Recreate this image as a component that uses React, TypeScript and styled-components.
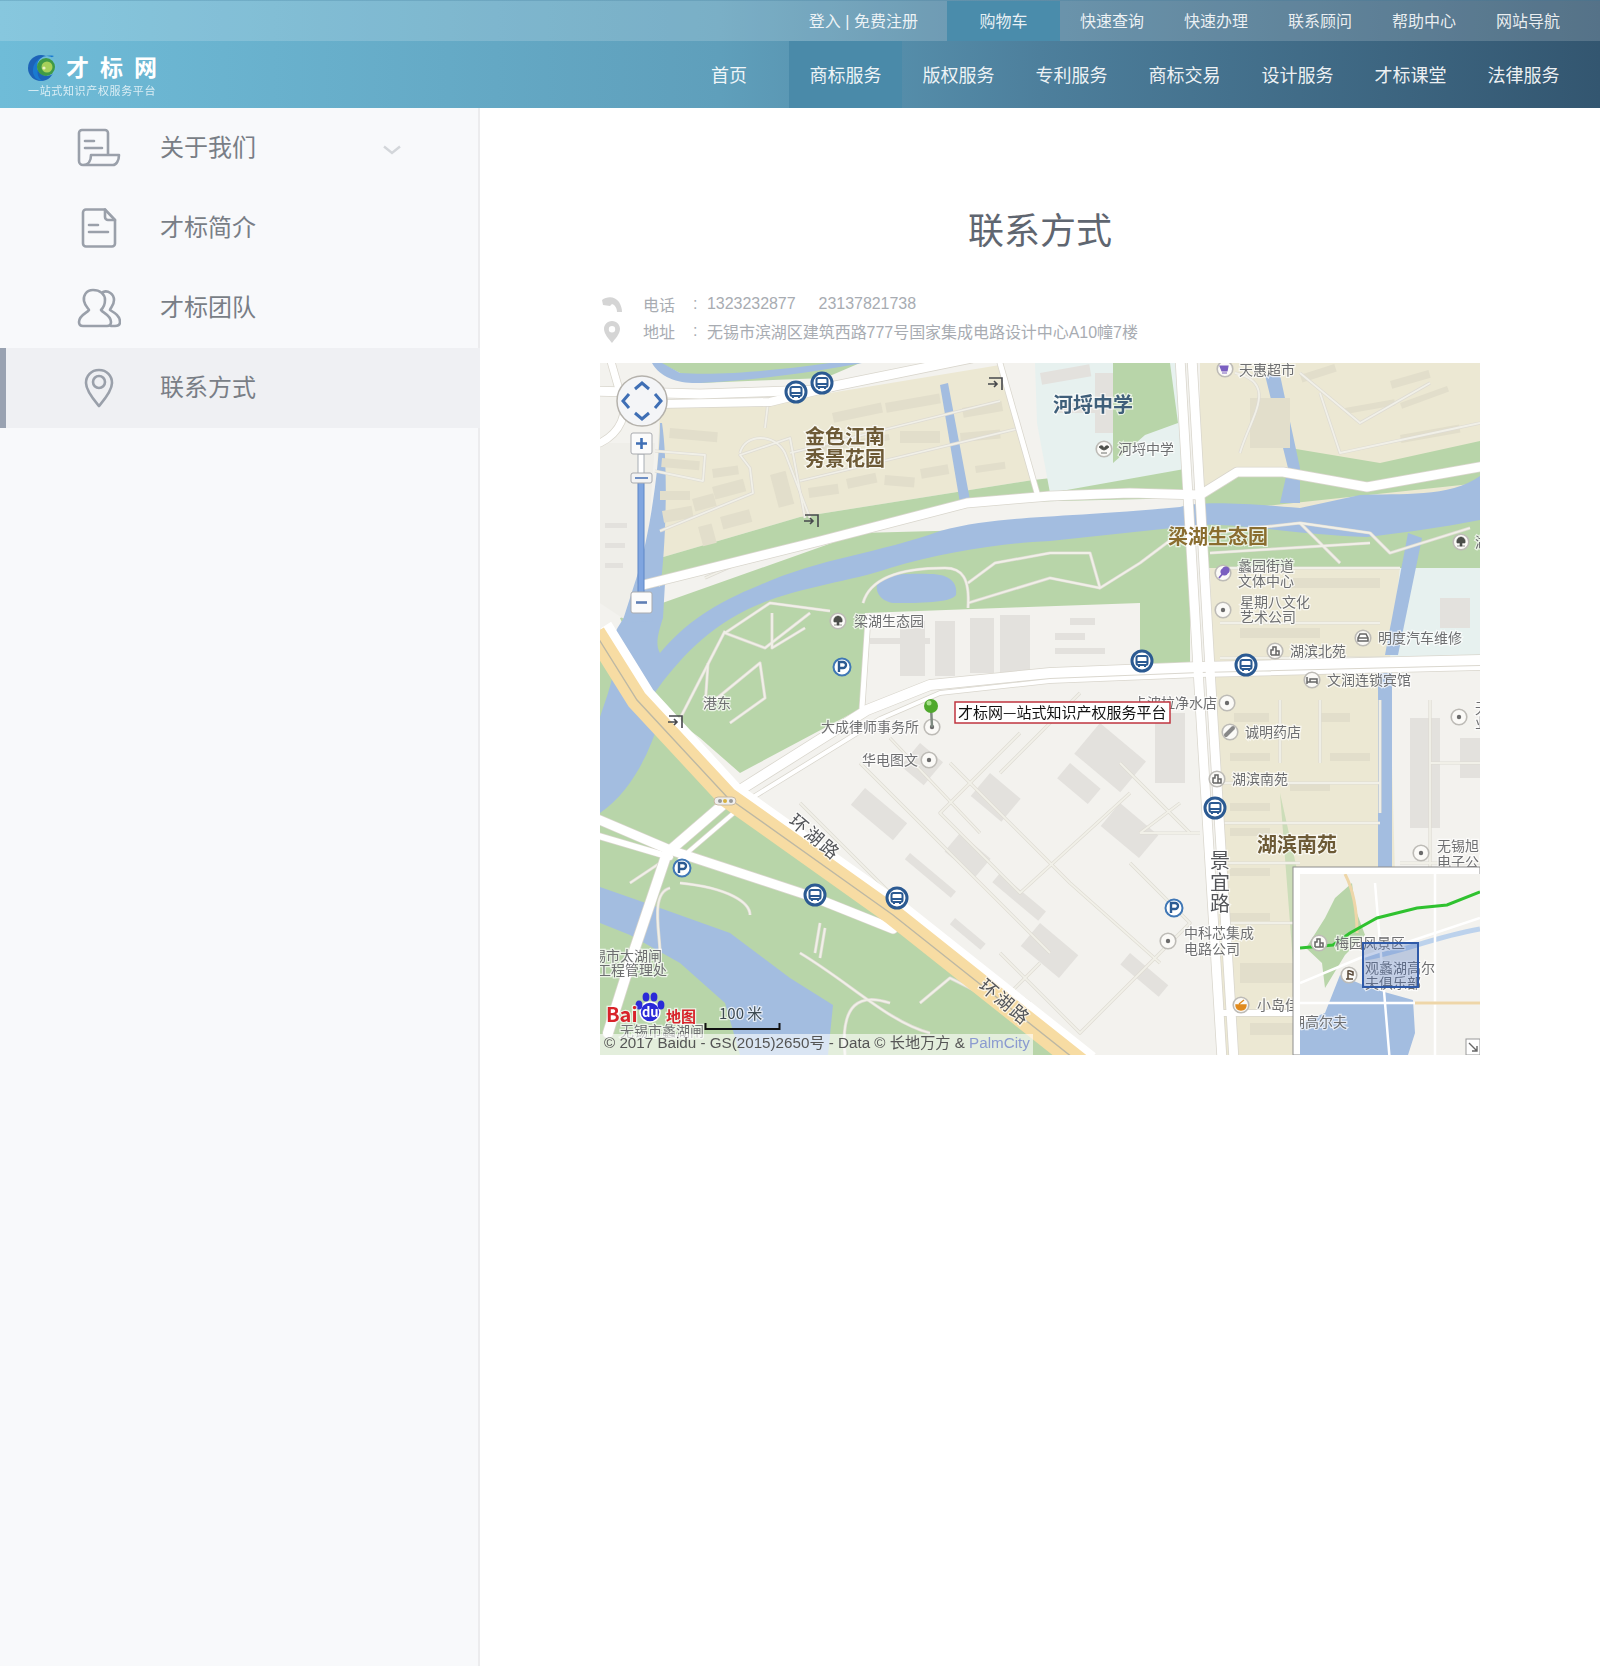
import * as React from 'react'
import styled, { createGlobalStyle } from 'styled-components'

const GlobalStyle = createGlobalStyle`
  html, body {
    margin: 0;
    padding: 0;
    background: #fff;
    font-family: "Liberation Sans", "Noto Sans CJK SC", sans-serif;
  }
  * { box-sizing: border-box; }
`

const Header = styled.header`
  height: 108px;
  background: linear-gradient(90deg, #6fbcd8 0%, #5f9fbb 45%, #4d7f9c 65%, #335670 100%);
`

const TopBar = styled.div`
  height: 41px;
  display: flex;
  justify-content: flex-end;
  padding-right: 20px;
  background: rgba(255, 255, 255, 0.17);
  border-top: 1px solid rgba(60, 120, 150, 0.25);
`

const TopLink = styled.a<{ $active?: boolean; $wide?: boolean }>`
  display: flex;
  align-items: center;
  justify-content: center;
  height: 100%;
  padding: ${({ $wide }) => ($wide ? '0 29px 3px 0' : '0 20px 3px')};
  width: ${({ $active }) => ($active ? '113px' : 'auto')};
  font-size: 16px;
  color: rgba(255, 255, 255, 0.88);
  background: ${({ $active }) => ($active ? '#4a8cab' : 'transparent')};
`

const MainBar = styled.div`
  height: 67px;
  display: flex;
  align-items: stretch;
  padding-right: 20px;
`

const LogoBlock = styled.div`
  display: flex;
  flex-direction: column;
  padding: 13px 0 0 28px;
  margin-right: auto;
  color: #fff;
`

const LogoRow = styled.div`
  display: flex;
  align-items: center;
  gap: 8px;
  height: 28px;
`

const LogoName = styled.div`
  font-size: 23px;
  line-height: 26px;
  letter-spacing: 11px;
  font-weight: 700;
  white-space: nowrap;
`

const LogoSub = styled.div`
  margin-top: 2px;
  font-size: 11px;
  line-height: 14px;
  letter-spacing: 0.65px;
  opacity: 0.75;
  white-space: nowrap;
`

const NavLink = styled.a<{ $active?: boolean; $first?: boolean }>`
  display: flex;
  align-items: center;
  padding: 0 20.5px 2px;
  margin-right: ${({ $first }) => ($first ? '21.500px' : '0')};
  font-size: 18px;
  color: rgba(255, 255, 255, 0.92);
  background: ${({ $active }) => ($active ? '#4a8aa9' : 'transparent')};
`

const Body = styled.div`
  display: flex;
  align-items: stretch;
`

const Sidebar = styled.aside`
  width: 480px;
  min-height: 1558px;
  flex: none;
  background: #f8f9fb;
  border-right: 2px solid #ececee;
`

const SideItem = styled.div<{ $active?: boolean }>`
  display: flex;
  align-items: center;
  gap: 39px;
  height: 80px;
  margin-right: ${({ $active }) => ($active ? '-2px' : '0')};
  padding-left: 77px;
  font-size: 24px;
  line-height: 30px;
  color: #797e86;
  background: ${({ $active }) => ($active ? '#eff0f3' : 'transparent')};
  box-shadow: ${({ $active }) => ($active ? 'inset 6px 0 0 #99a2b1' : 'none')};
`

const SideLabel = styled.span`
  margin-top: 0;
`

const SideIcon = styled.span`
  display: flex;
  align-items: center;
  justify-content: center;
  width: 44px;
  height: 44px;
  svg {
    fill: none;
    stroke: #9aa0aa;
    stroke-width: 2.6;
    stroke-linecap: round;
    stroke-linejoin: round;
  }
`

const Chevron = styled.svg`
  margin: 4px 0 0 88px;
  fill: none;
  stroke: #d3d6da;
  stroke-width: 2.4;
`

const Main = styled.main`
  flex: 1;
  min-width: 0;
  padding: 99px 120px 0;
`

const Title = styled.h1`
  margin: 0 0 34px;
  font-size: 36px;
  line-height: 50px;
  font-weight: 400;
  text-align: center;
  color: #5f6670;
`

const InfoRow = styled.div`
  display: flex;
  align-items: center;
  height: 27px;
  font-size: 16px;
  color: #a8acb2;
  white-space: nowrap;
`

const InfoIcon = styled.span`
  display: flex;
  justify-content: center;
  width: 24px;
  margin-right: 19px;
  svg { fill: #d5d5d5; }
`

const InfoKey = styled.span`
  width: 50px;
  margin-top: -2px;
`

const InfoColon = styled.span`
  width: 14px;
  margin-top: -2px;
`

const InfoValue = styled.span`
  margin-top: -1px;
  letter-spacing: -0.04px;
`

const Phone = styled(InfoValue)`
  margin-right: 23px;
`

const MapFrame = styled.div`
  margin-top: 18px;
  width: 880px;
  height: 692px;
  overflow: hidden;
  svg {
    display: block;
    filter: blur(0.4px);
  }
`

const MapText = styled.text.attrs({ dy: -1.5 })<{ $size?: number; $color?: string; $bold?: boolean; $halo?: boolean }>`
  font-family: "Noto Sans CJK SC", sans-serif;
  font-size: ${({ $size }) => $size ?? 14}px;
  font-weight: ${({ $bold }) => ($bold ? 700 : 400)};
  fill: ${({ $color }) => $color ?? '#6e6f71'};
  dominant-baseline: central;
  paint-order: stroke;
  stroke: rgba(255, 255, 255, 0.7);
  stroke-width: ${({ $halo }) => ($halo === false ? 0 : 2.5)}px;
`

const Copyright = styled.text`
  font-family: "Liberation Sans", "Noto Sans CJK SC", sans-serif;
  font-size: 15.2px;
  fill: #555;
  dominant-baseline: central;
`

const C = {
  base: '#f3f2ee',
  beige: '#ece8d3',
  lot: '#e2decb',
  green: '#b8d5a9',
  blue: '#a3bde0',
  teal: '#e7f1ef',
  block: '#e3e1dd',
  lane: '#dedbd3',
}

const Bus = ({ x, y }: { x: number; y: number }) => (
  <g transform={`translate(${x} ${y})`}>
    <circle r="10" fill="#fff" stroke="#2b5a92" strokeWidth="3" />
    <rect x="-5.5" y="-5" width="11" height="9" rx="2" fill="none" stroke="#2b5a92" strokeWidth="2" />
    <path d="M-5 1H5M-3 6V4M3 6V4" stroke="#2b5a92" strokeWidth="2" />
  </g>
)

const Parking = ({ x, y }: { x: number; y: number }) => (
  <g transform={`translate(${x} ${y})`}>
    <circle r="8.5" fill="#fff" stroke="#3f77b5" strokeWidth="2" />
    <path d="M-3 5V-5H1a3 3 0 0 1 0 6H-3" fill="none" stroke="#2b5a92" strokeWidth="2.4" />
  </g>
)

const Exit = ({ x, y }: { x: number; y: number }) => (
  <g transform={`translate(${x} ${y})`} fill="none" stroke="#46484c" strokeWidth="1.6">
    <path d="M-6 -6H7V6" />
    <path d="M-7 0H2M-1 -3L2 0L-1 3" />
  </g>
)

type PoiKind = 'dot' | 'tree' | 'house' | 'car' | 'bed' | 'mic' | 'pill' | 'food' | 'flag' | 'shop' | 'school'

const PoiGlyph = ({ kind }: { kind: PoiKind }) => {
  switch (kind) {
    case 'tree':
      return <path d="M-4 1C-5 -3 -2 -5 0 -5C2 -5 5 -3 4 1ZM-1 1H1V4H-1ZM-4 4H4" fill="#4c4f4a" stroke="#4c4f4a" strokeWidth="0.6" />
    case 'house':
      return <path d="M-4 4V-1L-2 -1V-4H1V4M1 0H4V4H-4" fill="none" stroke="#666" strokeWidth="1.5" />
    case 'car':
      return <path d="M-5 3V0L-3 -4H3L5 0V3ZM-5 0H5" fill="#fff" stroke="#666" strokeWidth="1.5" />
    case 'bed':
      return <path d="M-5 4V-3M-5 2H5V4M5 2V-1H-2V2" fill="none" stroke="#666" strokeWidth="1.5" />
    case 'mic':
      return <path d="M-4 5L1 -1M0 -4a3 3 0 1 0 4 4a3 3 0 1 0-4-4Z" fill="#7a5fc0" stroke="#7a5fc0" strokeWidth="1.8" />
    case 'pill':
      return <path d="M-4 3L3 -4" stroke="#888" strokeWidth="4" strokeLinecap="round" />
    case 'food':
      return <path d="M-5 0H5C5 4 2 5 0 5C-2 5 -5 4 -5 0ZM-2 -1L3 -5" fill="#e08a1e" stroke="#e08a1e" strokeWidth="1.4" />
    case 'flag':
      return <path d="M-3 4H4M-1 4V-4C1 -5 3 -3 4 -3V0C2 0 1 -2 -1 -1" fill="none" stroke="#5a4a3a" strokeWidth="1.5" />
    case 'shop':
      return <path d="M-5 -3H3L2 2H-3ZM-3 4H2" fill="#7a5fc0" stroke="#7a5fc0" strokeWidth="1.2" />
    case 'school':
      return <path d="M-5 -2C-2 -5 0 -2 0 0C0 -2 3 -5 5 -2C3 0 1 1 0 1C-1 1 -3 0 -5 -2ZM-3 4H3" fill="#4c4f4a" stroke="#4c4f4a" strokeWidth="0.8" />
    default:
      return <circle r="2.2" fill="#6b6b6b" />
  }
}

const Poi = ({ x, y, kind = 'dot' }: { x: number; y: number; kind?: PoiKind }) => (
  <g transform={`translate(${x} ${y})`}>
    <circle r="7.8" fill="#fbfaf7" stroke="#bdbbb6" strokeWidth="1.6" />
    <PoiGlyph kind={kind} />
  </g>
)

const Roads = ({ list }: { list: [string, number][] }) => (
  <g fill="none" strokeLinejoin="round" strokeLinecap="round">
    {list.map(([d, w]) => (
      <path key={`o${d}`} d={d} stroke="#d9d6cd" strokeWidth={w + 1.5} />
    ))}
    {list.map(([d, w]) => (
      <path key={d} d={d} stroke="#fff" strokeWidth={w} />
    ))}
  </g>
)

const bigRoads: [string, number][] = [
  ['M-5 28L100 31L215 27L372 -5', 9],
  ['M60 41L170 39L232 24', 8],
  ['M0 80C20 70 30 50 20 30L10 -5', 7],
  ['M43 222L220 178L367 140L450 133L530 130L600 132L637 109L683 109L767 124L885 103', 9],
  ['M885 297L600 304L450 310L330 322L267 347L140 427L67 490L30 600L8 670', 10],
  ['M885 305L600 312L450 318L340 330L280 356L150 436L80 496', 4],
  ['M-5 455L70 487L213 534L293 566', 9],
  ['M-5 472L70 494', 6],
  ['M262 345L268 255', 5],
  ['M580 -5L600 340L622 697', 9],
  ['M592 -5L612 340L634 697', 9],
  ['M620 650H700', 6],
  ['M400 0L437 130', 5],
]

const thinPaths = [
  'M55 88L105 92L103 118L55 108',
  'M60 168L153 130L150 105L140 92L190 75L205 155',
  'M140 90C145 70 175 70 185 90L210 155',
  'M190 90L400 38',
  'M200 118L420 65',
  'M165 65L168 40',
  'M105 215L150 195L185 190',
  'M263 240C270 215 300 205 345 205C362 205 370 215 368 245',
  'M368 220L395 200L450 190L490 190L500 225L540 200L580 170',
  'M368 240L450 215L500 225',
  'M230 248L170 240L125 270L165 285L210 250',
  'M172 250V285L205 265',
  'M108 300L105 345L160 300L165 335L130 360',
  'M125 268L70 375',
  'M610 170L700 160L770 170L790 190L870 165',
  'M700 160L740 200',
  'M610 190L770 180',
  'M635 10C680 20 650 55 640 90',
  'M700 10L760 60L830 20M720 30L740 90L880 60',
  'M620 205H800M620 260H780M620 295H790',
  'M680 337V400M720 337V400M780 337V450',
  'M620 420H780M620 460H780M620 500H700M620 560H700',
  'M830 337V620M830 400H880M800 500H880',
  'M350 400L470 520L560 600M420 370L340 450L420 530L530 430M480 330L400 410M520 400L590 470',
  'M260 400L360 500L450 590M290 375L380 470M200 440L310 550L430 640',
  'M530 500L590 560L480 670L400 590M540 470L580 440M600 470H540',
  'M30 520L60 500M80 520C130 525 150 540 150 552M70 525C50 530 60 570 60 590',
  'M220 560L215 590M225 565L220 595M200 590C250 620 290 660 330 670M320 640L350 615L400 640L440 600',
  'M245 692C240 640 260 630 290 640',
]

const lots: [number, number, number, number, number][] = [
  [70, 65, 48, 10, 5],
  [62, 95, 38, 9, 5],
  [112, 106, 26, 9, -8],
  [60, 128, 30, 9, 0],
  [62, 148, 30, 12, -10],
  [92, 136, 22, 13, -15],
  [112, 124, 32, 13, -15],
  [120, 154, 30, 13, -15],
  [98, 164, 14, 20, -15],
  [170, 112, 16, 34, -15],
  [208, 125, 30, 10, -8],
  [246, 116, 30, 10, -12],
  [285, 112, 30, 10, 5],
  [320, 106, 28, 10, -10],
  [232, 50, 50, 10, -12],
  [285, 40, 55, 10, -10],
  [300, 68, 40, 12, 0],
  [362, 45, 40, 10, -10],
  [360, 70, 40, 9, -5],
  [375, 103, 30, 7, -8],
  [210, 85, 80, 6, -10],
  [650, 35, 40, 50, 0],
  [700, 12, 36, 8, -18],
  [790, 18, 40, 8, -16],
  [745, 45, 50, 6, -10],
  [800, 40, 50, 6, -20],
  [800, 72, 60, 8, -10],
  [640, 265, 40, 10, 0],
  [680, 265, 40, 10, 0],
  [690, 215, 50, 10, 0],
  [740, 215, 40, 10, 0],
  [634, 350, 35, 9, 0],
  [720, 350, 30, 9, 0],
  [630, 390, 40, 8, 0],
  [730, 390, 40, 8, 0],
  [690, 420, 40, 8, 0],
  [630, 440, 40, 8, 0],
  [630, 465, 40, 8, 0],
  [630, 505, 40, 8, 0],
  [630, 550, 40, 8, 0],
  [640, 600, 60, 20, 0],
  [650, 660, 50, 12, 0],
]

const blocks: [number, number, number, number, number][] = [
  [270, 275, 60, 6, 0],
  [300, 258, 25, 55, 0],
  [335, 258, 20, 55, 0],
  [370, 255, 24, 55, 0],
  [400, 252, 30, 60, 0],
  [455, 270, 30, 7, 0],
  [470, 255, 25, 7, 0],
  [455, 285, 50, 6, 0],
  [265, 425, 55, 22, 40],
  [320, 380, 30, 30, 40],
  [390, 410, 40, 30, 40],
  [360, 470, 40, 24, 40],
  [400, 510, 60, 12, 40],
  [520, 440, 50, 30, 40],
  [500, 360, 60, 40, 40],
  [470, 400, 40, 20, 40],
  [440, 560, 50, 30, 40],
  [530, 590, 50, 15, 40],
  [310, 490, 60, 8, 40],
  [355, 555, 40, 8, 40],
  [555, 350, 30, 70, 0],
  [810, 355, 30, 110, 0],
  [860, 375, 20, 40, 0],
  [5, 160, 22, 5, 0],
  [5, 180, 20, 5, 0],
  [5, 200, 18, 5, 0],
  [440, 10, 50, 12, -10],
  [455, 40, 40, 10, 0],
  [840, 235, 30, 30, 0],
  [495, 10, 18, 60, 0],
]

const smallLabels: [number, number, string][] = [
  [639, 7, '天惠超市'],
  [518, 86, '河埒中学'],
  [638, 203, '蠡园街道'],
  [638, 218, '文体中心'],
  [640, 239, '星期八文化'],
  [640, 254, '艺术公司'],
  [778, 275, '明度汽车维修'],
  [690, 288, '湖滨北苑'],
  [727, 317, '文润连锁宾馆'],
  [533, 340, '卡波拉净水店'],
  [645, 369, '诚明药店'],
  [632, 416, '湖滨南苑'],
  [584, 570, '中科芯集成'],
  [584, 586, '电路公司'],
  [657, 642, '小岛佳'],
  [837, 483, '无锡旭日'],
  [837, 499, '电子公司'],
  [875, 345, '无'],
  [875, 360, '业'],
  [875, 179, '湖'],
  [254, 258, '梁湖生态园'],
  [103, 340, '港东'],
  [221, 364, '大成律师事务所'],
  [262, 397, '华电图文'],
  [-8, 593, '锡市太湖闸'],
  [-3, 607, '工程管理处'],
  [20, 668, '无锡市蠡湖闸'],
]

const poiPoints: [number, number, PoiKind][] = [
  [625, 6, 'shop'],
  [504, 86, 'school'],
  [623, 210, 'mic'],
  [623, 247, 'dot'],
  [763, 275, 'car'],
  [675, 288, 'house'],
  [712, 317, 'bed'],
  [627, 340, 'dot'],
  [630, 369, 'pill'],
  [617, 416, 'house'],
  [568, 578, 'dot'],
  [641, 642, 'food'],
  [821, 490, 'dot'],
  [859, 354, 'dot'],
  [861, 179, 'tree'],
  [238, 258, 'tree'],
  [332, 364, 'dot'],
  [329, 397, 'dot'],
]

const MapDrawing = () => (
  <svg width="880" height="692" viewBox="0 0 880 692">
    <defs>
      <clipPath id="inset">
        <rect x="700" y="511" width="180" height="181" />
      </clipPath>
    </defs>
    <rect width="880" height="692" fill={C.base} />

    {/* land use */}
    <polygon points="60,45 230,30 400,2 433,117 200,154 53,197" fill={C.beige} />
    <polygon points="60,0 260,0 225,15 100,20" fill={C.green} />
    <polygon points="53,197 200,154 433,117 590,100 590,135 367,140 220,178 43,222" fill={C.green} />
    <polygon points="435,0 575,0 590,105 450,130 437,60" fill={C.teal} />
    <polygon points="513,0 570,0 578,60 545,72 513,100" fill={C.green} />
    <polygon points="600,0 880,0 880,180 600,180" fill={C.beige} />
    <polygon points="690,85 780,100 880,78 880,110 770,125 690,112" fill={C.green} />
    <polygon points="600,132 637,112 683,112 767,128 880,108 880,120 600,150" fill={C.green} />
    <polygon points="600,160 880,150 880,205 600,205" fill={C.green} />
    <polygon points="610,205 800,205 790,330 800,692 622,692" fill={C.beige} />
    <polygon points="800,205 880,205 880,295 790,295" fill={C.teal} />
    <polygon points="680,430 700,520 720,692 700,692 690,560" fill={C.green} opacity="0.6" />
    <polygon points="20,255 260,170 450,165 590,150 590,300 540,300 540,240 265,250 262,345 140,410 100,375 60,345 40,300" fill={C.green} />
    <polygon points="0,270 127,430 293,552 475,692 0,692" fill={C.green} />
    <polygon points="0,80 55,80 45,220 30,260 0,240" fill="#efeee9" />

    {/* water */}
    <g fill={C.blue}>
      <path d="M52 0C60 15 80 21 100 20C160 17 220 8 262 0H230C180 7 120 13 80 10L62 0Z" />
      <path d="M880 113V157C840 165 800 170 767 174C700 172 640 160 600 162L450 178C400 180 340 190 290 205C240 222 180 225 130 256C90 280 60 320 45 345L60 355C50 390 30 430 0 450V354C8 330 20 300 15 270C30 240 50 230 65 220L63 255C58 270 55 282 60 290C85 260 115 240 160 222C220 195 280 190 340 168C400 152 450 156 580 144C600 138 640 140 700 145L760 132C800 130 850 135 880 113Z" />
      <path d="M340 22L348 20L370 137L360 140Z" />
      <path d="M665 12L680 12L700 105L700 140L680 140L688 105Z" />
      <path d="M808 170L822 175L798 292H785Z" />
      <rect x="778" y="295" width="14" height="210" />
      <path d="M60 60C60 100 50 170 38 210L22 260L52 258L62 210C66 170 68 100 62 60Z" />
      <path d="M0 524L60 545L130 570L190 615L233 642L228 692H140L125 640L80 600L30 572L0 560Z" />
      <path d="M277 222C282 212 300 210 330 211C350 211 358 220 356 232C350 240 320 240 295 240C285 240 275 232 277 222Z" />
    </g>

    {/* buildings */}
    {lots.map(([x, y, w, h, r]) => (
      <rect key={`l${x}${y}`} x={x} y={y} width={w} height={h} fill={C.lot} transform={`rotate(${r} ${x} ${y})`} />
    ))}
    {blocks.map(([x, y, w, h, r]) => (
      <rect key={`b${x}${y}`} x={x} y={y} width={w} height={h} fill={C.block} transform={`rotate(${r} ${x} ${y})`} />
    ))}

    {/* lanes */}
    <g fill="none" strokeLinejoin="round">
      {thinPaths.map((d) => (
        <path key={`o${d}`} d={d} stroke={C.lane} strokeWidth="3.2" />
      ))}
      {thinPaths.map((d) => (
        <path key={d} d={d} stroke="#f1f0e8" strokeWidth="1.8" />
      ))}
    </g>

    <Roads list={bigRoads} />

    {/* ring road */}
    <g fill="none">
      <path d="M6 262L48 330L137 427L303 545L492 695" stroke="#fff" strokeWidth="12" />
      <path d="M-5 270L37 337L127 434L293 552L482 702" stroke="#f7dca3" strokeWidth="21" />
      <path d="M-5 270L37 337L127 434L293 552L482 702" stroke="#bdb8a4" strokeWidth="1.4" />
    </g>
    <rect x="114" y="434" width="22" height="8" rx="4" fill="#eee" stroke="#c9b9a0" />
    <circle cx="120" cy="438" r="2" fill="#999" />
    <circle cx="125" cy="438" r="2" fill="#d7b13f" />
    <circle cx="131" cy="438" r="2" fill="#999" />

    {/* poi */}
    {poiPoints.map(([x, y, kind]) => (
      <Poi key={`p${x}${y}`} x={x} y={y} kind={kind} />
    ))}
    {smallLabels.map(([x, y, text]) => (
      <MapText key={text + x} x={x} y={y}>
        {text}
      </MapText>
    ))}

    <MapText x={205} y={74} $size={20} $bold $color="#6d5a36">金色江南</MapText>
    <MapText x={205} y={96} $size={20} $bold $color="#6d5a36">秀景花园</MapText>
    <MapText x={453} y={42} $size={20} $bold $color="#3f5f7a">河埒中学</MapText>
    <MapText x={568} y={174} $size={20} $bold $color="#8a6d2f">梁湖生态园</MapText>
    <MapText x={657} y={482} $size={20} $bold $color="#6d5a36">湖滨南苑</MapText>
    <MapText x={610} y={498} $size={20} $color="#54565a">景</MapText>
    <MapText x={610} y={520} $size={20} $color="#54565a">宜</MapText>
    <MapText x={610} y={541} $size={20} $color="#54565a">路</MapText>
    <MapText x={215} y={474} $size={18} $color="#54565a" textAnchor="middle" letterSpacing="2" transform="rotate(40 215 474)">环湖路</MapText>
    <MapText x={405} y={639} $size={18} $color="#54565a" textAnchor="middle" letterSpacing="2" transform="rotate(40 405 639)">环湖路</MapText>

    {[[196, 29], [222, 20], [542, 298], [646, 302], [215, 532], [297, 535], [615, 445]].map(([x, y]) => (
      <Bus key={`bus${x}`} x={x} y={y} />
    ))}
    {[[242, 304], [82, 505], [574, 545]].map(([x, y]) => (
      <Parking key={`park${x}`} x={x} y={y} />
    ))}
    {[[395, 21], [211, 158], [75, 359]].map(([x, y]) => (
      <Exit key={`exit${x}`} x={x} y={y} />
    ))}

    {/* marker */}
    <path d="M331 343L332 364" stroke="#7e8a80" strokeWidth="2.5" />
    <circle cx="331" cy="343" r="7" fill="#4fa82c" />
    <circle cx="329" cy="340" r="2.5" fill="#a6e08a" />
    <rect x="355" y="339" width="215" height="21" fill="#fff" stroke="#c0353f" strokeWidth="1.5" />
    <MapText x={358} y={350} $size={15} $color="#111" $halo={false}>才标网—站式知识产权服务平台</MapText>

    {/* pan and zoom */}
    <circle cx="42" cy="38" r="25" fill="#f4f5f7" stroke="#b5b2ac" strokeWidth="1.5" />
    <g fill="none" stroke="#3f6fb5" strokeWidth="3">
      <path d="M35 26L42 20L49 26" />
      <path d="M35 50L42 56L49 50" />
      <path d="M29 31L23 38L29 45" />
      <path d="M55 31L61 38L55 45" />
    </g>
    <rect x="38" y="91" width="6" height="24" fill="#fff" stroke="#a8aeb6" />
    <rect x="38" y="118" width="6" height="112" fill="#7fa5e0" stroke="#5f86c6" />
    <rect x="31" y="70" width="21" height="21" rx="2" fill="#fbfbfb" stroke="#a9abaf" />
    <path d="M36 80.5H47M41.5 75V86" stroke="#3f6fb5" strokeWidth="2.6" />
    <rect x="31" y="110" width="21" height="10" rx="2" fill="#f3f3f3" stroke="#a9abaf" />
    <path d="M35 115H48" stroke="#6f8fc4" strokeWidth="2" />
    <rect x="31" y="229" width="21" height="21" rx="2" fill="#fbfbfb" stroke="#a9abaf" />
    <path d="M36 239.5H47" stroke="#5f7fb5" strokeWidth="2.6" />

    {/* overview */}
    <rect x="693" y="504" width="187" height="188" fill="#fff" stroke="#8e8e8e" />
    <g clipPath="url(#inset)">
      <rect x="700" y="511" width="180" height="181" fill="#f3f2ee" />
      <polygon points="752,520 755,545 765,572 745,592 725,625 722,600 706,585 725,555 735,535" fill={C.green} />
      <path d="M700 660L725 650L740 612L770 625L813 637L815 670L808 692H700Z" fill={C.blue} />
      <path d="M765 595C800 590 830 575 880 566" fill="none" stroke="#bcd2ec" strokeWidth="5" />
      <g fill="none" stroke="#fff" strokeWidth="2.5">
        <path d="M700 620L760 595L880 555" />
        <path d="M835 511V692M775 520L790 700M880 640H700" />
      </g>
      <path d="M745 511C755 530 757 555 757 570" fill="none" stroke="#eed6a8" strokeWidth="3" />
      <path d="M815 640H880" fill="none" stroke="#eed6a8" strokeWidth="3" />
      <path d="M700 585L733 582L750 570L777 555L817 545L847 542L880 529" fill="none" stroke="#2fc22f" strokeWidth="3" />
      <Poi x={719} y={580} kind="house" />
      <Poi x={749} y={612} kind="flag" />
      <MapText x={735} y={580}>梅园风景区</MapText>
      <MapText x={765} y={605}>观蠡湖高尔</MapText>
      <MapText x={765} y={620}>夫俱乐部</MapText>
      <MapText x={691} y={659}>湖高尔夫</MapText>
      <rect x="763" y="580" width="55" height="44" fill="rgba(70,110,190,0.3)" stroke="#2f5aa8" strokeWidth="2" />
      <rect x="866" y="676" width="14" height="16" fill="#fff" stroke="#999" />
      <path d="M869 680L877 688M877 683V688H872" fill="none" stroke="#666" strokeWidth="1.4" />
    </g>

    {/* baidu logo, scale, copyright */}
    <g transform="translate(50 645)">
      <circle cx="0" cy="4" r="10" fill="#2a2ad8" stroke="#fff" strokeWidth="1.5" />
      <ellipse cx="-11" cy="-3" rx="3.4" ry="4.5" fill="#2a2ad8" />
      <ellipse cx="-4" cy="-11" rx="3.4" ry="4.5" fill="#2a2ad8" />
      <ellipse cx="4" cy="-11" rx="3.4" ry="4.5" fill="#2a2ad8" />
      <ellipse cx="11" cy="-3" rx="3.4" ry="4.5" fill="#2a2ad8" />
      <MapText x={-8} y={5} $size={13} $bold $color="#fff" $halo={false}>du</MapText>
    </g>
    <MapText x={6} y={652} $size={20} $bold $color="#d8232a">Bai</MapText>
    <MapText x={66} y={654} $size={15} $bold $color="#d8232a">地图</MapText>
    <MapText x={119} y={651} $size={15} $color="#3d4a50">100 米</MapText>
    <path d="M105.5 660V666H179.5V660" fill="none" stroke="#111" strokeWidth="2" />
    <rect x="0" y="671" width="433" height="21" fill="rgba(255,255,255,0.6)" />
    <Copyright x={4} y={679}>
      © 2017 Baidu - GS(2015)2650号 - Data © 长地万方 &amp; <tspan fill="#8b9bd0">PalmCity</tspan>
    </Copyright>
  </svg>
)

const SwirlLogo = () => (
  <svg width="30" height="28" viewBox="0 0 30 28">
    <circle cx="13" cy="14" r="13" fill="#1d63b8" />
    <path d="M26 2C16 0 6 6 5 15C4 22 9 27 15 27C8 24 8 14 14 9C18 5 23 4 26 2Z" fill="#1a7ad0" />
    <circle cx="19" cy="12" r="10" fill="#6fbcd8" />
    <circle cx="18" cy="13" r="9" fill="#3f9a46" />
    <circle cx="19" cy="13" r="5.5" fill="#a6d05a" />
    <circle cx="16" cy="14" r="1.6" fill="#e9f2c0" />
  </svg>
)

const topLinks = ['快速查询', '快速办理', '联系顾问', '帮助中心', '网站导航']
const navLinks = ['版权服务', '专利服务', '商标交易', '设计服务', '才标课堂', '法律服务']

export default function App() {
  return (
    <>
      <GlobalStyle />
      <Header>
        <TopBar>
          <TopLink $wide>登入 | 免费注册</TopLink>
          <TopLink $active>购物车</TopLink>
          {topLinks.map((label) => (
            <TopLink key={label}>{label}</TopLink>
          ))}
        </TopBar>
        <MainBar>
          <LogoBlock>
            <LogoRow>
              <SwirlLogo />
              <LogoName>才标网</LogoName>
            </LogoRow>
            <LogoSub>一站式知识产权服务平台</LogoSub>
          </LogoBlock>
          <NavLink $first>首页</NavLink>
          <NavLink $active>商标服务</NavLink>
          {navLinks.map((label) => (
            <NavLink key={label}>{label}</NavLink>
          ))}
        </MainBar>
      </Header>
      <Body>
        <Sidebar>
          <SideItem>
            <SideIcon>
              <svg width="44" height="40" viewBox="0 0 44 40">
                <path d="M31 27V5a3 3 0 0 0-3-3H5a3 3 0 0 0-3 3v28a4 4 0 0 0 4 4h30c3 0 6-4 6-10H14c0 5-2 10-8 10" />
                <path d="M8 13h9M8 20h17" />
              </svg>
            </SideIcon>
            <SideLabel>关于我们</SideLabel>
            <Chevron width="18" height="10" viewBox="0 0 18 10">
              <path d="M1 1.5L9 8L17 1.5" />
            </Chevron>
          </SideItem>
          <SideItem>
            <SideIcon>
              <svg width="36" height="40" viewBox="0 0 36 40">
                <path d="M24 1.5H5a3 3 0 0 0-3 3v31a3 3 0 0 0 3 3h26a3 3 0 0 0 3-3V12z" />
                <path d="M24 1.5V9a3 3 0 0 0 3 3h7M8 17h9M8 24h19" />
              </svg>
            </SideIcon>
            <SideLabel>才标简介</SideLabel>
          </SideItem>
          <SideItem>
            <SideIcon>
              <svg width="44" height="40" viewBox="0 0 44 40">
                <path d="M16 2C9 2 6 8 7 13C8 18 11 20 12 22C10 25 2 27 2 34C2 37 4 38 6 38H30C33 38 34 36 34 34C34 27 26 25 24 22C26 20 28 17 28 12C28 6 23 2 16 2Z" />
                <path d="M26 4C31 2 37 6 37 12C37 17 34 19 33 22C38 25 43 28 43 34C43 37 41 38 38 38H34" />
              </svg>
            </SideIcon>
            <SideLabel>才标团队</SideLabel>
          </SideItem>
          <SideItem $active>
            <SideIcon>
              <svg width="30" height="40" viewBox="0 0 30 40">
                <path d="M15 2C7 2 2 8 2 15C2 23 10 32 15 38C20 32 28 23 28 15C28 8 23 2 15 2Z" />
                <circle cx="15" cy="14" r="6" />
              </svg>
            </SideIcon>
            <SideLabel>联系方式</SideLabel>
          </SideItem>
        </Sidebar>
        <Main>
          <Title>联系方式</Title>
          <InfoRow>
            <InfoIcon>
              <svg width="22" height="17" viewBox="0 0 22 17">
                <path d="M1 4C6 0 14 0 18 6C20 9 21 13 21 16L16 16C16 12 14 9 11 8L9 10L2 9Z" />
              </svg>
            </InfoIcon>
            <InfoKey>电话</InfoKey>
            <InfoColon>:</InfoColon>
            <Phone>1323232877</Phone>
            <InfoValue>23137821738</InfoValue>
          </InfoRow>
          <InfoRow>
            <InfoIcon>
              <svg width="16" height="22" viewBox="0 0 16 22">
                <path fillRule="evenodd" d="M8 0C3 0 0 4 0 8C0 13 5 18 8 22C11 18 16 13 16 8C16 4 13 0 8 0ZM8 5A3.2 3.2 0 1 1 8 11.400A3.2 3.2 0 0 1 8 5Z" />
              </svg>
            </InfoIcon>
            <InfoKey>地址</InfoKey>
            <InfoColon>:</InfoColon>
            <InfoValue>无锡市滨湖区建筑西路777号国家集成电路设计中心A10幢7楼</InfoValue>
          </InfoRow>
          <MapFrame>
            <MapDrawing />
          </MapFrame>
        </Main>
      </Body>
    </>
  )
}
